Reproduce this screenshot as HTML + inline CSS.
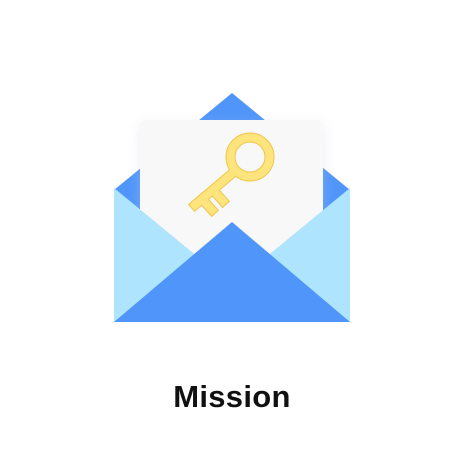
<!DOCTYPE html>
<html><head><style>
html,body{margin:0;padding:0;background:#fff;width:464px;height:464px;overflow:hidden}
.t{position:absolute;left:0;width:464px;top:379px;text-align:center;font:bold 31px "Liberation Sans",sans-serif;color:#111;letter-spacing:0.3px}
</style></head><body>
<svg width="464" height="464" style="position:absolute;left:0;top:0">
<defs><filter id="s" x="-20%" y="-20%" width="140%" height="140%"><feGaussianBlur stdDeviation="6"/></filter></defs>
<polygon points="114,190 232,93 350,190 350,322 114,322" fill="#5096fa"/>
<rect x="140" y="124" width="183" height="150" rx="6" fill="#c8cde0" opacity="0.35" filter="url(#s)"/>
<rect x="140" y="120" width="183" height="170" rx="6" fill="#f8f8f9"/>
<g stroke="#f0c64a" stroke-width="10" fill="none" stroke-linecap="square">
<circle cx="250" cy="157" r="19.5"/>
<line x1="235" y1="171" x2="195" y2="205"/>
<line x1="202" y1="199" x2="212" y2="210"/>
<line x1="213" y1="190" x2="223" y2="201"/>
</g>
<g stroke="#fde47c" stroke-width="8" fill="none" stroke-linecap="square">
<circle cx="250" cy="157" r="19.5"/>
<line x1="235" y1="171" x2="195" y2="205"/>
<line x1="202" y1="199" x2="212" y2="210"/>
<line x1="213" y1="190" x2="223" y2="201"/>
</g>
<polygon points="114,188 232,285 350,188 350,322 114,322" fill="#aee4fd"/>
<polygon points="114,322 232,222 350,322" fill="#5096fa"/>
</svg>
<div class="t">Mission</div>
</body></html>
